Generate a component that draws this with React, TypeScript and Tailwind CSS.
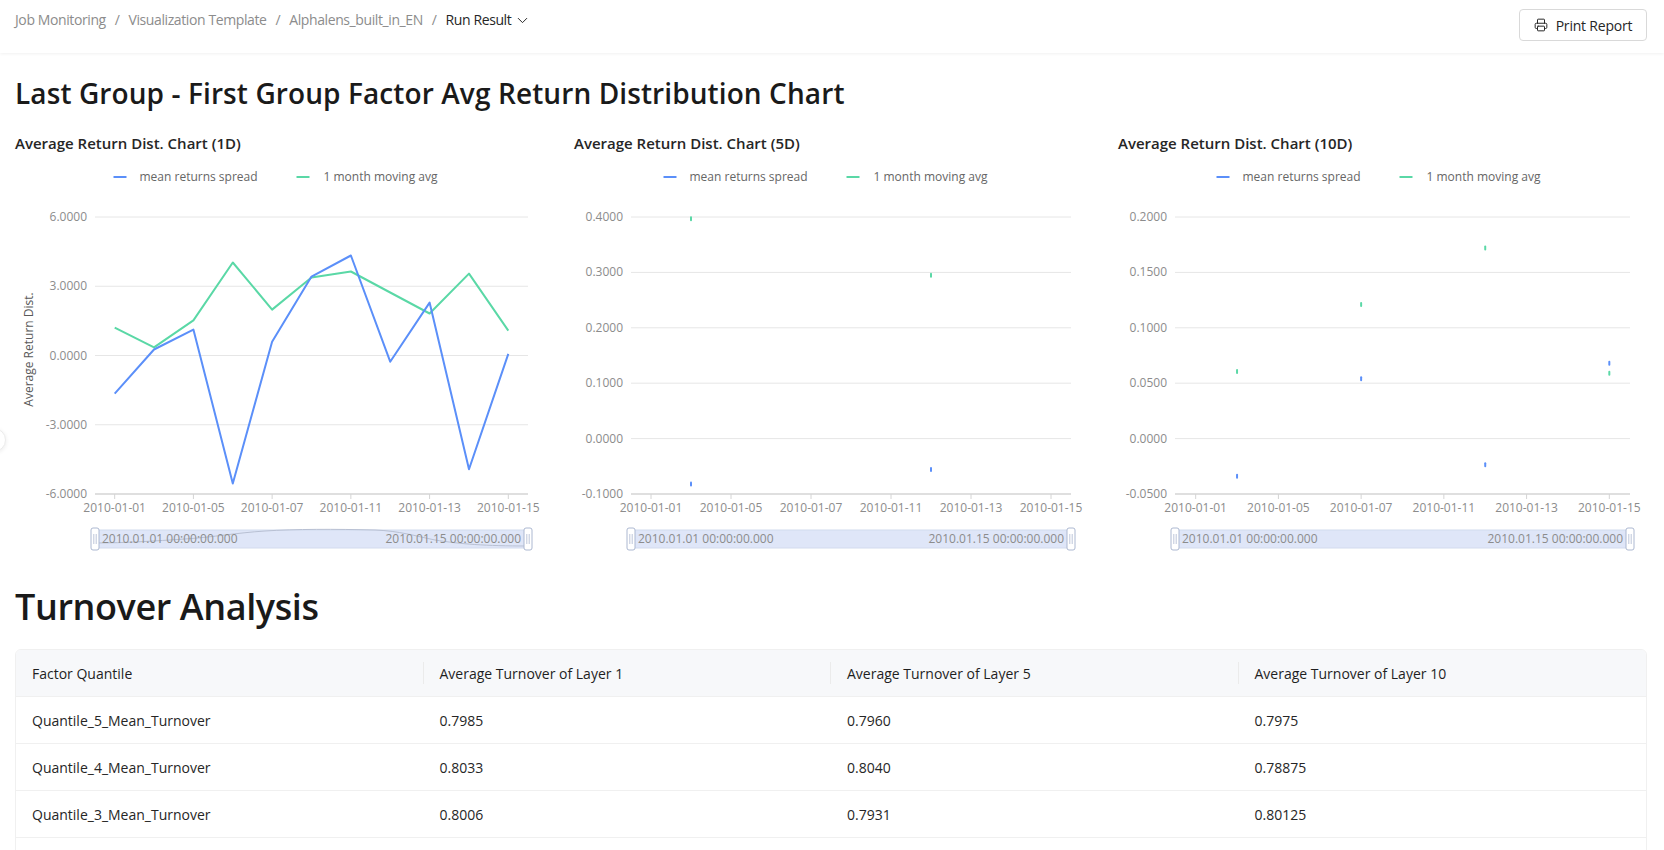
import { ChevronDown, Printer } from 'lucide-react';

const BLUE = '#5B8FF9';
const GREEN = '#5AD8A6';
const DATES = ['2010-01-01', '2010-01-05', '2010-01-07', '2010-01-11', '2010-01-13', '2010-01-15'];

type Series = (number | null)[];

interface ChartProps {
  title: string;
  titleClass?: string;
  gridLeft: number;
  gridRight: number;
  ticks: number[];
  legendCx: number;
  blue: Series;
  green: Series;
  yAxisName?: string;
  shadow?: string;
}

const TOP = 60;
const BOTTOM = 337;

/** Small hand-drawn line chart, styled after the echarts defaults used in the report. */
function ReturnChart({ title, titleClass, gridLeft, gridRight, ticks, legendCx, blue, green, yAxisName, shadow }: ChartProps) {
  const max = ticks[0];
  const min = ticks[ticks.length - 1];
  const band = (gridRight - gridLeft) / 11;
  const px = (i: number) => gridLeft + band * (i + 0.5);
  const py = (v: number) => TOP + ((max - v) / (max - min)) * (BOTTOM - TOP);

  const path = (s: Series) => {
    let d = '';
    s.forEach((v, i) => {
      if (v === null) return;
      const prev = i > 0 ? s[i - 1] : null;
      d += `${prev === null ? 'M' : 'L'}${px(i).toFixed(1)},${py(v).toFixed(1)} `;
    });
    return d;
  };

  // points with no neighbour are drawn as a short dash, like echarts does
  const dots = (s: Series, color: string) =>
    s.map((v, i) =>
      v !== null && (i === 0 || s[i - 1] === null) && (i === s.length - 1 || s[i + 1] === null) ? (
        <rect key={i} x={px(i) - 1} y={py(v) - 2.5} width={2} height={5} rx={1} fill={color} />
      ) : null,
    );

  const mid = (TOP + BOTTOM) / 2 - 6;

  return (
    <div className="flex flex-col">
      <h3 className={`mb-[3px] text-[15px] leading-[22px] font-semibold text-[#262626] ${titleClass ?? ''}`}>{title}</h3>
      <svg width={544} height={400} className="block overflow-visible">
        {/* legend */}
        <g fontSize={12} fill="#666">
          <line x1={legendCx - 159} x2={legendCx - 146} y1={20} y2={20} stroke={BLUE} strokeWidth={2} />
          <text x={legendCx - 133} y={24}>mean returns spread</text>
          <line x1={legendCx + 24} x2={legendCx + 37} y1={20} y2={20} stroke={GREEN} strokeWidth={2} />
          <text x={legendCx + 51} y={24}>1 month moving avg</text>
        </g>

        {/* y axis */}
        {ticks.map((t) => (
          <g key={t}>
            {t !== min && (
              <line x1={gridLeft} x2={gridRight} y1={py(t)} y2={py(t)} stroke="#e6e6e6" strokeWidth={1} />
            )}
            <text x={gridLeft - 8} y={py(t) + 4} textAnchor="end" fontSize={12} fill="#8c8c8c">
              {t.toFixed(4)}
            </text>
          </g>
        ))}
        {yAxisName && (
          <text x={18} y={mid} fontSize={12} fill="#595959" textAnchor="middle" transform={`rotate(-90 18 ${mid})`}>
            {yAxisName}
          </text>
        )}

        {/* x axis */}
        <line x1={gridLeft} x2={gridRight} y1={BOTTOM} y2={BOTTOM} stroke="#d4d4d4" strokeWidth={1.5} />
        {DATES.map((d, k) => (
          <g key={d}>
            <line x1={px(k * 2)} x2={px(k * 2)} y1={BOTTOM} y2={BOTTOM + 5} stroke="#d4d4d4" />
            <text x={px(k * 2)} y={BOTTOM + 18} textAnchor="middle" fontSize={12} fill="#8c8c8c">
              {d}
            </text>
          </g>
        ))}

        {/* series */}
        <path d={path(green)} fill="none" stroke={GREEN} strokeWidth={2} strokeLinejoin="round" />
        <path d={path(blue)} fill="none" stroke={BLUE} strokeWidth={2} strokeLinejoin="round" />
        {dots(green, GREEN)}
        {dots(blue, BLUE)}

        {/* data zoom slider */}
        <rect x={gridLeft} y={373} width={gridRight - gridLeft} height={18} fill="#dfe6f8" stroke="#d2dbee" />
        {shadow && <path d={shadow} fill="none" stroke="#b8c0d3" strokeWidth={1} />}
        <text x={gridLeft + 7} y={386} fontSize={12} fill="#8c8c8c">
          2010.01.01 00:00:00.000
        </text>
        <text x={gridRight - 7} y={386} fontSize={12} fill="#8c8c8c" textAnchor="end">
          2010.01.15 00:00:00.000
        </text>
        {[gridLeft, gridRight].map((x) => (
          <g key={x}>
            <rect x={x - 4} y={371} width={8} height={22} rx={2} fill="#fff" stroke="#acb8d1" />
            <line x1={x - 1.2} x2={x - 1.2} y1={377} y2={387} stroke="#acb8d1" strokeWidth={0.8} />
            <line x1={x + 1.2} x2={x + 1.2} y1={377} y2={387} stroke="#acb8d1" strokeWidth={0.8} />
          </g>
        ))}
      </svg>
    </div>
  );
}

const ROWS = [
  ['Quantile_5_Mean_Turnover', '0.7985', '0.7960', '0.7975'],
  ['Quantile_4_Mean_Turnover', '0.8033', '0.8040', '0.78875'],
  ['Quantile_3_Mean_Turnover', '0.8006', '0.7931', '0.80125'],
];

const HEAD = ['Factor Quantile', 'Average Turnover of Layer 1', 'Average Turnover of Layer 5', 'Average Turnover of Layer 10'];

export default function App() {
  const n = null;
  return (
    <div className="relative min-h-screen bg-white font-['Open_Sans','Noto_Sans',sans-serif] text-[#1f1f1f]">
      <header className="flex h-[53px] items-start justify-between pl-[15px] pr-[17px] shadow-[0_1px_3px_rgba(0,0,0,0.06)]">
        <nav className="mt-[9px] flex items-center text-[14px] leading-[22px] tracking-[-0.4px] text-[#8c8c8c]">
          <span>Job Monitoring</span>
          <span className="mx-[9px]">/</span>
          <span>Visualization Template</span>
          <span className="mx-[9px]">/</span>
          <span>Alphalens_built_in_EN</span>
          <span className="mx-[9px]">/</span>
          <span className="flex items-center gap-[3px] text-[#262626]">
            Run Result <ChevronDown size={17} strokeWidth={1.4} />
          </span>
        </nav>
        <button className="mt-[9px] flex h-[32px] w-[128px] items-center justify-center gap-[8px] rounded-[4px] border border-[#d9d9d9] bg-white text-[14px] tracking-[-0.2px] text-[#262626]">
          <Printer size={14} strokeWidth={1.7} />
          Print Report
        </button>
      </header>

      <div
        className="absolute left-[-18px] top-[428px] h-[24px] w-[24px] rounded-full border border-[#ececec] bg-white shadow-[0_1px_4px_rgba(0,0,0,0.08)]"
        aria-hidden
      />

      <main className="pl-[15px] pr-[17px]">
        <h2 className="mt-[22px] text-[28px] leading-[36px] font-semibold tracking-[0.1px] text-[#1a1a1a]">
          Last Group - First Group Factor Avg Return Distribution Chart
        </h2>

        <div className="mt-[21px] grid grid-cols-3">
          <ReturnChart
            title="Average Return Dist. Chart (1D)"
            gridLeft={80}
            gridRight={513}
            ticks={[6, 3, 0, -3, -6]}
            legendCx={257.5}
            yAxisName="Average Return Dist."
            blue={[-1.65, 0.26, 1.12, -5.55, 0.6, 3.42, 4.33, -0.27, 2.29, -4.93, 0.07]}
            green={[1.21, 0.35, 1.52, 4.03, 1.99, 3.38, 3.64, 2.73, 1.82, 3.55, 1.08]}
            shadow="M80,386 C110,386 140,384 170,382 C200,380 220,376 250,374 C280,372 320,372 360,373 C385,374 400,379 420,383 C445,387 470,389 513,389"
          />
          <ReturnChart
            title="Average Return Dist. Chart (5D)"
            titleClass="pl-[15px]"
            gridLeft={72}
            gridRight={512}
            ticks={[0.4, 0.3, 0.2, 0.1, 0, -0.1]}
            legendCx={263.5}
            blue={[n, -0.082, n, n, n, n, n, -0.056, n, n, n]}
            green={[n, 0.397, n, n, n, n, n, 0.295, n, n, n]}
          />
          <ReturnChart
            title="Average Return Dist. Chart (10D)"
            titleClass="pl-[15px]"
            gridLeft={72}
            gridRight={527}
            ticks={[0.2, 0.15, 0.1, 0.05, 0, -0.05]}
            legendCx={272.5}
            blue={[n, -0.034, n, n, 0.054, n, n, -0.0235, n, n, 0.068]}
            green={[n, 0.0606, n, n, 0.121, n, n, 0.172, n, n, 0.059]}
          />
        </div>

        <h2 className="mt-[28px] text-[36px] leading-[44px] font-semibold tracking-[-0.4px] text-[#1a1a1a]">
          Turnover Analysis
        </h2>

        <div className="mt-[20px] overflow-hidden rounded-[6px] border border-[#f0f0f0]">
          <div className="grid h-[46px] grid-cols-4 bg-[#f7f8fa] text-[14px] font-medium text-[#1f1f1f]">
            {HEAD.map((h, i) => (
              <div key={h} className="relative flex items-center px-[16px]">
                {h}
                {i < 3 && <span className="absolute right-0 top-1/2 h-[22px] w-px -translate-y-1/2 bg-[#ebebeb]" />}
              </div>
            ))}
          </div>
          {ROWS.map((r) => (
            <div key={r[0]} className="grid h-[47px] grid-cols-4 border-t border-[#f0f0f0] text-[14px] text-[#262626]">
              {r.map((c, i) => (
                <div key={i} className="flex items-center px-[16px]">
                  {c}
                </div>
              ))}
            </div>
          ))}
          <div className="h-[47px] border-t border-[#f0f0f0]" />
        </div>
      </main>
    </div>
  );
}
